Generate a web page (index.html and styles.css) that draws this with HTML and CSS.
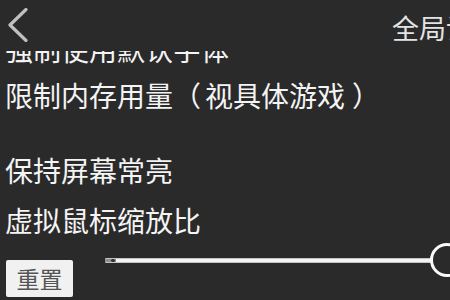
FILE: index.html
```html
<!DOCTYPE html>
<html lang="zh">
<head>
<meta charset="utf-8">
<link rel="stylesheet" href="styles.css">
</head>
<body>
<div class="screen">
  <header class="topbar">
    <svg class="back" width="22" height="34" viewBox="0 0 22 34">
      <path d="M19 1.5 L3 17 L19 32.5" fill="none" stroke="#bfbfbf" stroke-width="3.2" stroke-linecap="round" stroke-linejoin="round"/>
    </svg>
    <div class="title">全局设置</div>
  </header>
  <main class="content">
    <div class="list">
      <div class="item first">强制使用默认字体</div>
      <div class="item second">限制内存用量<span class="lp">（</span>视具体游戏<span class="rp">）</span></div>
      <div class="item third">保持屏幕常亮</div>
      <div class="item fourth">虚拟鼠标缩放比</div>
      <div class="slider-row">
        <button class="reset">重置</button>
        <div class="slider">
          <div class="track"></div>
          <div class="thumb"></div>
        </div>
      </div>
    </div>
  </main>
</div>
</body>
</html>
```
FILE: styles.css
```css
html, body {
  margin: 0;
  padding: 0;
  background: #2a2a2a;
}
body {
  width: 450px;
  height: 300px;
  overflow: hidden;
  font-family: "Noto Sans CJK SC", "Noto Sans", sans-serif;
}
.screen {
  width: 450px;
  height: 300px;
  display: flex;
  flex-direction: column;
  overflow: hidden;
}
.topbar {
  height: 51px;
  flex-shrink: 0;
  display: flex;
  align-items: center;
  padding-left: 7px;
  background: #2a2a2a;
  position: relative;
  z-index: 2;
  overflow: hidden;
}
.back {
  flex-shrink: 0;
  margin-top: -2px;
}
.title {
  flex-shrink: 0;
  white-space: nowrap;
  margin-left: 363px;
  font-size: 27px;
  line-height: 27px;
  color: #e4e4e4;
  margin-top: 3px;
}
.content {
  flex: 1;
  overflow: hidden;
}
.list {
  display: flex;
  flex-direction: column;
}
.item {
  padding-left: 5px;
  font-size: 28px;
  line-height: 28px;
  color: #f4f4f4;
  white-space: nowrap;
}
.lp {
  margin-right: 4px;
}
.rp {
  margin-left: 7px;
}
.first { margin-top: -16px; }
.second { margin-top: 18px; }
.third { margin-top: 47px; }
.fourth { margin-top: 22px; }
.slider-row {
  margin-top: 9px;
  display: flex;
  align-items: flex-start;
}
.reset {
  flex-shrink: 0;
  margin: 17px 0 0 6px;
  width: 67px;
  height: 37px;
  padding: 0;
  border: none;
  border-radius: 2px;
  background: #f1f1f1;
  color: #555;
  font-family: "Noto Sans CJK SC", sans-serif;
  font-size: 23px;
  line-height: 37px;
}
.slider {
  flex-shrink: 0;
  width: 359px;
  margin-left: 32px;
  height: 34px;
  display: flex;
  align-items: center;
}
.track {
  flex: 1;
  height: 5px;
  border-radius: 1px;
  background:
    radial-gradient(circle at 8px 2.5px, #333 0 1.5px, transparent 2px),
    linear-gradient(to right, #8f8f8f 0 11px, #f4f4f4 11px);
  box-shadow: inset 0 1px 0 #c4c4c4, inset 0 -1px 0 #c4c4c4;
}
.thumb {
  flex-shrink: 0;
  width: 28px;
  height: 28px;
  margin-left: -2px;
  border: 3px solid #fafafa;
  border-radius: 50%;
  background: #2a2a2a;
}
```
